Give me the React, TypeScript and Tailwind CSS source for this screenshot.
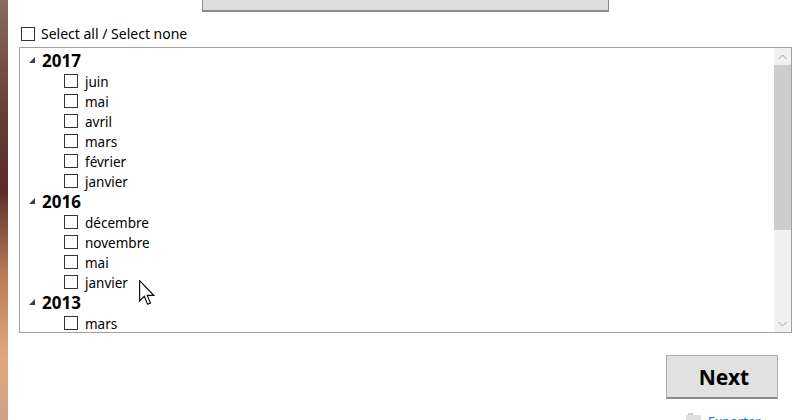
import React from "react";

const tree: { year: string; months: string[] }[] = [
  { year: "2017", months: ["juin", "mai", "avril", "mars", "février", "janvier"] },
  { year: "2016", months: ["décembre", "novembre", "mai", "janvier"] },
  { year: "2013", months: ["mars"] },
];

function Box() {
  return <span className="inline-block w-[14px] h-[14px] border border-[#333333] bg-white shrink-0" />;
}

function Tri() {
  return (
    <svg width="7" height="7" viewBox="0 0 7 7" className="shrink-0">
      <polygon points="6,0 6,6 0,6" fill="#404040" />
    </svg>
  );
}

export default function App() {
  return (
    <div
      className="relative w-[800px] h-[420px] overflow-hidden bg-white flex text-black"
      style={{ fontFamily: '"Noto Sans", "Open Sans", sans-serif' }}
    >
      <div className="w-[8px] h-full shrink-0 bg-[linear-gradient(180deg,#8b6a5e_0%,#6a4038_25%,#5a2c28_45%,#b87a58_65%,#e2a878_85%,#cfa088_100%)]" />
      <div className="flex-1 flex flex-col pl-[11px] pr-[8px]">
        <div className="flex h-[12px]">
          <div className="ml-[183px] w-[407px] h-[12px] bg-[#dddddd] border-x border-b border-[#8a8a8a] border-b-2" />
        </div>
        <div className="flex items-center gap-[6px] mt-[15px] ml-[2px] h-[14px]">
          <Box />
          <span className="text-[14px] leading-none">Select all / Select none</span>
        </div>
        <div className="mt-[6px] h-[286px] border border-[#a0a0a0] flex">
          <div className="flex-1 flex flex-col pt-[2px] overflow-hidden">
            {tree.map((g) => (
              <div key={g.year} className="flex flex-col">
                <div className="flex items-center h-[21px] pl-[9px] gap-[6px]">
                  <Tri />
                  <span className="text-[17px] font-bold leading-none">{g.year}</span>
                </div>
                {g.months.map((m) => (
                  <div key={m} className="flex items-center h-[20px] pl-[44px] gap-[7px] shrink-0">
                    <Box />
                    <span className="text-[13.5px] leading-none pt-[4px]">{m}</span>
                  </div>
                ))}
              </div>
            ))}
          </div>
          <div className="w-[17px] bg-[#f0f0f0] flex flex-col">
            <div className="h-[17px] flex items-center justify-center">
              <svg width="9" height="6" viewBox="0 0 9 6">
                <polyline points="0.5,5 4.5,1 8.5,5" fill="none" stroke="#a0a0a0" strokeWidth="1" />
              </svg>
            </div>
            <div className="h-[165px] bg-[#cdcdcd]" />
            <div className="flex-1" />
            <div className="h-[17px] flex items-center justify-center">
              <svg width="9" height="6" viewBox="0 0 9 6">
                <polyline points="0.5,1 4.5,5 8.5,1" fill="none" stroke="#a0a0a0" strokeWidth="1" />
              </svg>
            </div>
          </div>
        </div>
        <div className="flex justify-end mt-[22px] pr-[14px]">
          <div className="w-[112px] h-[44px] bg-[#e1e1e1] border border-[#adadad] border-b-2 border-b-[#8a8a8a] flex items-center justify-center">
            <span className="text-[21px] font-bold leading-none pt-[1px] pl-[4px]">Next</span>
          </div>
        </div>
        <div className="flex items-start justify-end mt-[12px] gap-[6px] h-[20px]">
          <svg width="16" height="12" viewBox="0 0 16 12" className="mt-[1px]">
            <rect x="2" y="1" width="5" height="3" fill="#d0d0d0" />
            <rect x="0" y="3" width="15" height="9" fill="#e0e0e0" />
          </svg>
          <span className="text-[13px] leading-none text-[#1a6fd0] w-[84px] pt-[4px]">Exporter</span>
        </div>
      </div>
      <svg className="absolute left-[139px] top-[280px]" width="16" height="27" viewBox="0 0 13 22">
        <path d="M0.5,0.5 L0.5,17 L4.3,13.3 L7,19.8 L9.3,18.8 L6.7,12.5 L12,12.5 Z" fill="white" stroke="black" strokeWidth="0.9" strokeLinejoin="miter" />
      </svg>
    </div>
  );
}
